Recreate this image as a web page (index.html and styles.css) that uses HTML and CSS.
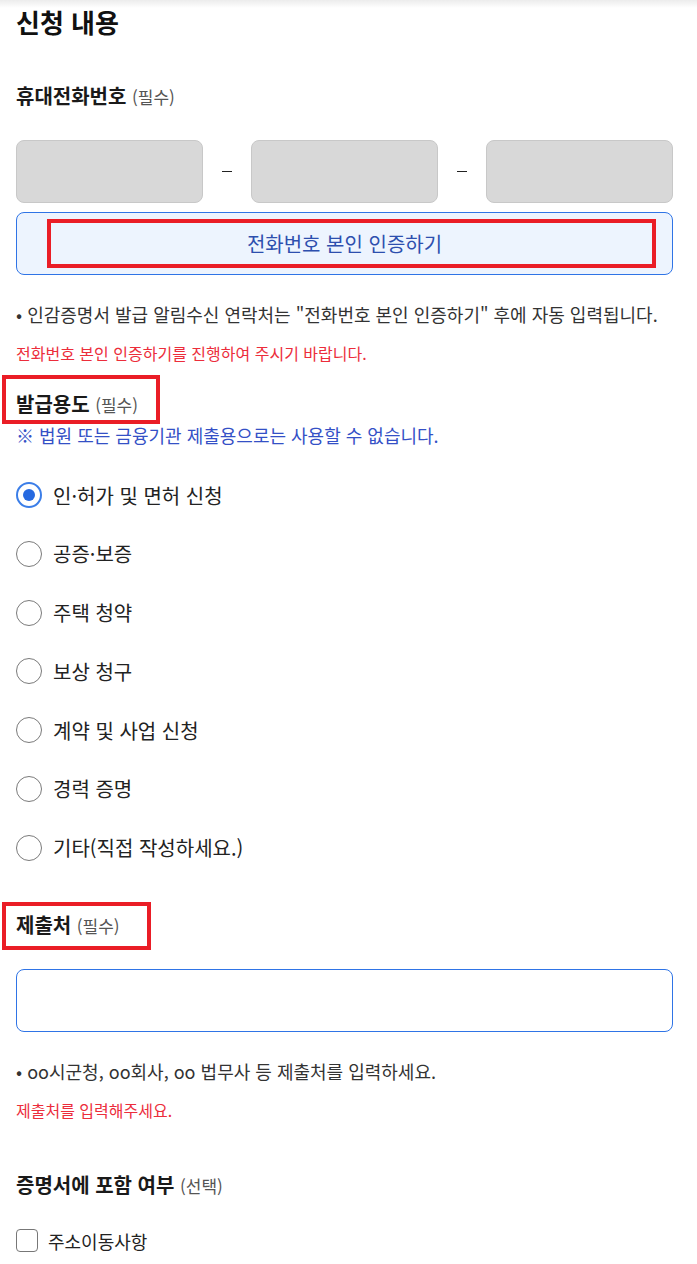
FILE: index.html
```html
<!DOCTYPE html>
<html lang="ko">

<head>
  <meta charset="UTF-8">
  <meta name="viewport" content="width=device-width, initial-scale=1.0">
  <title>신청 내용</title>
  <link rel="stylesheet" href="styles.css">
</head>

<body>
  <div class="page">
    <h1 class="title">신청 내용</h1>

    <section class="phone">
      <h2 class="label">휴대전화번호 <span class="req">(필수)</span></h2>
      <div class="phone-row">
        <input type="text" class="phone-box" disabled>
        <span class="dash"></span>
        <input type="text" class="phone-box" disabled>
        <span class="dash"></span>
        <input type="text" class="phone-box" disabled>
      </div>
      <button class="verify-btn" type="button">
        전화번호 본인 인증하기
        <span class="mark mark-btn"></span>
      </button>
      <p class="note">• 인감증명서 발급 알림수신 연락처는 "전화번호 본인 인증하기" 후에 자동 입력됩니다.</p>
      <p class="error">전화번호 본인 인증하기를 진행하여 주시기 바랍니다.</p>
    </section>

    <section class="purpose">
      <h2 class="label">
        <span class="mark mark-purpose"></span>
        발급용도 <span class="req">(필수)</span>
      </h2>
      <p class="info">※ 법원 또는 금융기관 제출용으로는 사용할 수 없습니다.</p>
      <div class="radios">
        <label class="radio"><input type="radio" name="purpose" checked><span class="dot"></span>인·허가 및 면허 신청</label>
        <label class="radio"><input type="radio" name="purpose"><span class="dot"></span>공증·보증</label>
        <label class="radio"><input type="radio" name="purpose"><span class="dot"></span>주택 청약</label>
        <label class="radio"><input type="radio" name="purpose"><span class="dot"></span>보상 청구</label>
        <label class="radio"><input type="radio" name="purpose"><span class="dot"></span>계약 및 사업 신청</label>
        <label class="radio"><input type="radio" name="purpose"><span class="dot"></span>경력 증명</label>
        <label class="radio"><input type="radio" name="purpose"><span class="dot"></span>기타(직접 작성하세요.)</label>
      </div>
    </section>

    <section class="submit-to">
      <h2 class="label">
        <span class="mark mark-submit"></span>
        제출처 <span class="req">(필수)</span>
      </h2>
      <input type="text" class="text-input">
      <p class="note">• oo시군청, oo회사, oo 법무사 등 제출처를 입력하세요.</p>
      <p class="error">제출처를 입력해주세요.</p>
    </section>

    <section class="include">
      <h2 class="label">증명서에 포함 여부 <span class="req">(선택)</span></h2>
      <label class="check"><input type="checkbox"><span class="box"></span>주소이동사항</label>
    </section>
  </div>
</body>

</html>
```

FILE: styles.css
```css
body {
  margin: 0;
  font-family: "Noto Sans CJK KR", "Noto Sans", sans-serif;
  color: #222;
  background: linear-gradient(to bottom, #ececec 0, #fff 8px) no-repeat;
}

.page {
  padding: 0 24px 0 16px;
}

.title {
  margin: 0;
  padding-top: 2px;
  font-size: 26px;
  line-height: 40px;
  font-weight: 700;
  color: #111;
}

.label {
  position: relative;
  margin: 0;
  font-size: 20px;
  line-height: 24px;
  font-weight: 700;
  color: #1a1a1a;
}

.req {
  font-size: 17px;
  font-weight: 400;
  color: #555;
}

.phone {
  margin-top: 42px;
}

.phone-row {
  display: grid;
  grid-template-columns: 1fr 48px 1fr 48px 1fr;
  margin-top: 31px;
}

.phone-box {
  height: 63px;
  box-sizing: border-box;
  background: #d8d8d8;
  border: 1px solid #c8c8c8;
  border-radius: 8px;
}

.dash {
  align-self: center;
  justify-self: center;
  width: 10px;
  height: 1px;
  background: #222;
}

.verify-btn {
  position: relative;
  display: block;
  width: 100%;
  height: 63px;
  margin-top: 9px;
  background: #edf4fe;
  border: 1px solid #2f74e6;
  border-radius: 8px;
  font-family: inherit;
  font-size: 20px;
  color: #2d4fae;
  cursor: pointer;
}

.mark {
  position: absolute;
  box-sizing: border-box;
  border: 4px solid #ea1d26;
}

.mark-btn {
  left: 30px;
  top: 6px;
  width: 609px;
  height: 49px;
}

.mark-purpose {
  left: -14px;
  top: -17px;
  width: 158px;
  height: 49px;
}

.mark-submit {
  left: -14px;
  top: -11px;
  width: 149px;
  height: 48px;
}

.note {
  margin: 27px 0 0;
  font-size: 18px;
  line-height: 24px;
  color: #333;
}

.error {
  margin: 17px 0 0;
  font-size: 16px;
  line-height: 20px;
  color: #ec2d3b;
}

.purpose {
  margin-top: 29px;
}

.info {
  margin: 7px 0 0;
  font-size: 18px;
  line-height: 22px;
  color: #3450c6;
}

.radios {
  display: flex;
  flex-direction: column;
  gap: 32.8px;
  margin-top: 36px;
}

.radio {
  display: flex;
  align-items: center;
  gap: 11px;
  height: 26px;
  font-size: 20px;
  color: #222;
}

.radio input,
.check input {
  display: none;
}

.dot {
  width: 26px;
  height: 26px;
  box-sizing: border-box;
  border: 1px solid #7a7a7a;
  border-radius: 50%;
  display: flex;
  align-items: center;
  justify-content: center;
}

.radio input:checked + .dot {
  border: 2px solid #3b7ee8;
}

.radio input:checked + .dot::after {
  content: "";
  width: 12px;
  height: 12px;
  border-radius: 50%;
  background: #2669e0;
}

.submit-to {
  margin-top: 52px;
}

.text-input {
  display: block;
  width: 100%;
  height: 63px;
  box-sizing: border-box;
  margin-top: 31px;
  border: 1px solid #2f74e6;
  border-radius: 8px;
  background: #fff;
}

.include {
  margin-top: 53px;
}

.check {
  display: flex;
  align-items: center;
  gap: 10px;
  margin-top: 30px;
  font-size: 18px;
  color: #222;
}

.box {
  width: 22px;
  height: 23px;
  box-sizing: border-box;
  border: 1px solid #777;
  border-radius: 4px;
}
```
